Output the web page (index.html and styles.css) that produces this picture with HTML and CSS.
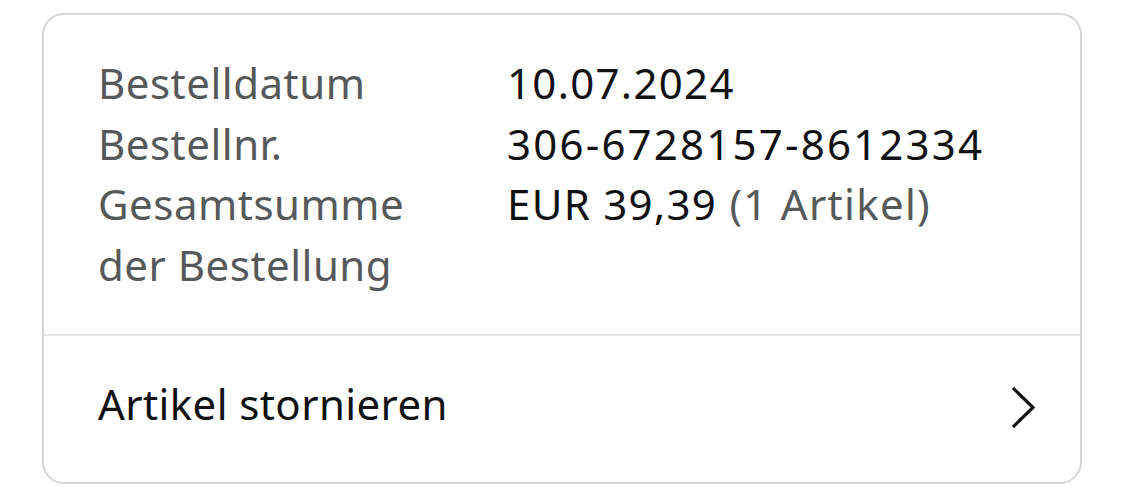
FILE: index.html
```html
<!DOCTYPE html>
<html lang="de">
<head>
<meta charset="utf-8">
<link rel="stylesheet" href="styles.css">
</head>
<body>
<div class="card">
  <div class="details">
    <div class="label">Bestelldatum</div>
    <div class="value">10.07.2024</div>
    <div class="label">Bestellnr.</div>
    <div class="value num">306-6728157-8612334</div>
    <div class="label">Gesamtsumme der Bestellung</div>
    <div class="value">EUR 39,39 <span class="muted">(1 Artikel)</span></div>
  </div>
  <div class="action">
    <span class="action-text">Artikel stornieren</span>
    <svg class="chev" width="26" height="44" viewBox="0 0 26 44"><path d="M3 2 L23 21.5 L3 41" fill="none" stroke="#0f1111" stroke-width="3.2"/></svg>
  </div>
</div>
</body>
</html>
```
FILE: styles.css
```css
html, body { margin: 0; padding: 0; background: #fff; }
body {
  font-family: "Noto Sans", "Open Sans", sans-serif;
  color: #0f1111;
  padding: 13px 43px 0 42px;
}
.card {
  border: 2px solid #d5d5d5;
  border-radius: 22px;
  height: 471px;
  box-sizing: border-box;
}
.details {
  display: grid;
  grid-template-columns: 409px 1fr;
  padding: 38px 40px 39px 54px;
  border-bottom: 2px solid #e3e3e3;
  font-size: 42px;
  line-height: 60.5px;
}
.label { color: #565959; width: 330px; letter-spacing: 0.5px; }
.value { color: #0f1111; letter-spacing: 1.3px; }
.value.num { letter-spacing: 2.2px; }
.muted { color: #565959; }
.action {
  display: flex;
  align-items: center;
  justify-content: space-between;
  height: 148px;
  padding: 0 44px 0 54px;
  font-size: 42px;
}
.action-text { margin-bottom: 14px; letter-spacing: 0.4px; }
.chev { display: block; margin-bottom: 5px; }
```
